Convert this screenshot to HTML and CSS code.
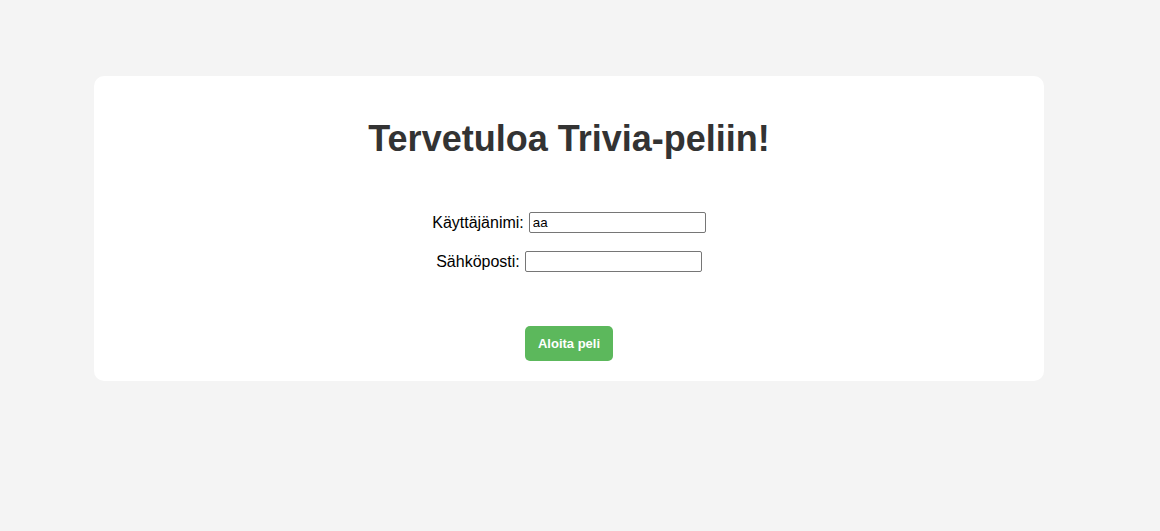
FILE: index.html
```html
<!DOCTYPE html>
<html lang="fi">
<head>
<meta charset="utf-8">
<title>Trivia</title>
<link rel="stylesheet" href="styles.css">
</head>
<body>
<div class="card">
  <h1 class="title">Tervetuloa Trivia-peliin!</h1>
  <form class="form">
    <div class="row">
      <label class="label" for="user">Käyttäjänimi:</label>
      <input class="input" id="user" type="text" value="aa">
    </div>
    <div class="row">
      <label class="label" for="email">Sähköposti:</label>
      <input class="input" id="email" type="text" value="">
    </div>
    <div class="actions">
      <button class="btn" type="button">Aloita peli</button>
    </div>
  </form>
</div>
</body>
</html>
```
FILE: styles.css
```css
html, body {
  margin: 0;
  padding: 0;
  background: #f4f4f4;
  font-family: "Liberation Sans", Arial, sans-serif;
}
body {
  padding-top: 76px;
}
.card {
  margin: 0 116px 0 94px;
  padding: 20px;
  background: #ffffff;
  border-radius: 10px;
}
.title {
  margin: 22px 0 0 0;
  font-size: 36px;
  line-height: 42px;
  font-weight: bold;
  color: #333333;
  text-align: center;
}
.form {
  margin-top: 52px;
}
.row {
  display: flex;
  justify-content: center;
  align-items: center;
  gap: 5px;
  height: 21px;
  margin-bottom: 18px;
}
.label {
  font-size: 16px;
  color: #000000;
}
.input {
  box-sizing: border-box;
  width: 177px;
  height: 21px;
  margin: 0;
  padding: 1px 3px;
  border: 1px solid #767676;
  border-radius: 2px;
  font-family: "Liberation Sans", Arial, sans-serif;
  font-size: 13.33px;
  color: #000000;
  background: #ffffff;
}
.actions {
  display: flex;
  justify-content: center;
  padding-top: 36px;
}
.btn {
  box-sizing: border-box;
  width: 88px;
  height: 35px;
  padding: 0;
  border: none;
  border-radius: 5px;
  background: #5cb85c;
  color: #ffffff;
  font-family: "Liberation Sans", Arial, sans-serif;
  font-size: 13px;
  font-weight: bold;
  text-align: center;
}
```
